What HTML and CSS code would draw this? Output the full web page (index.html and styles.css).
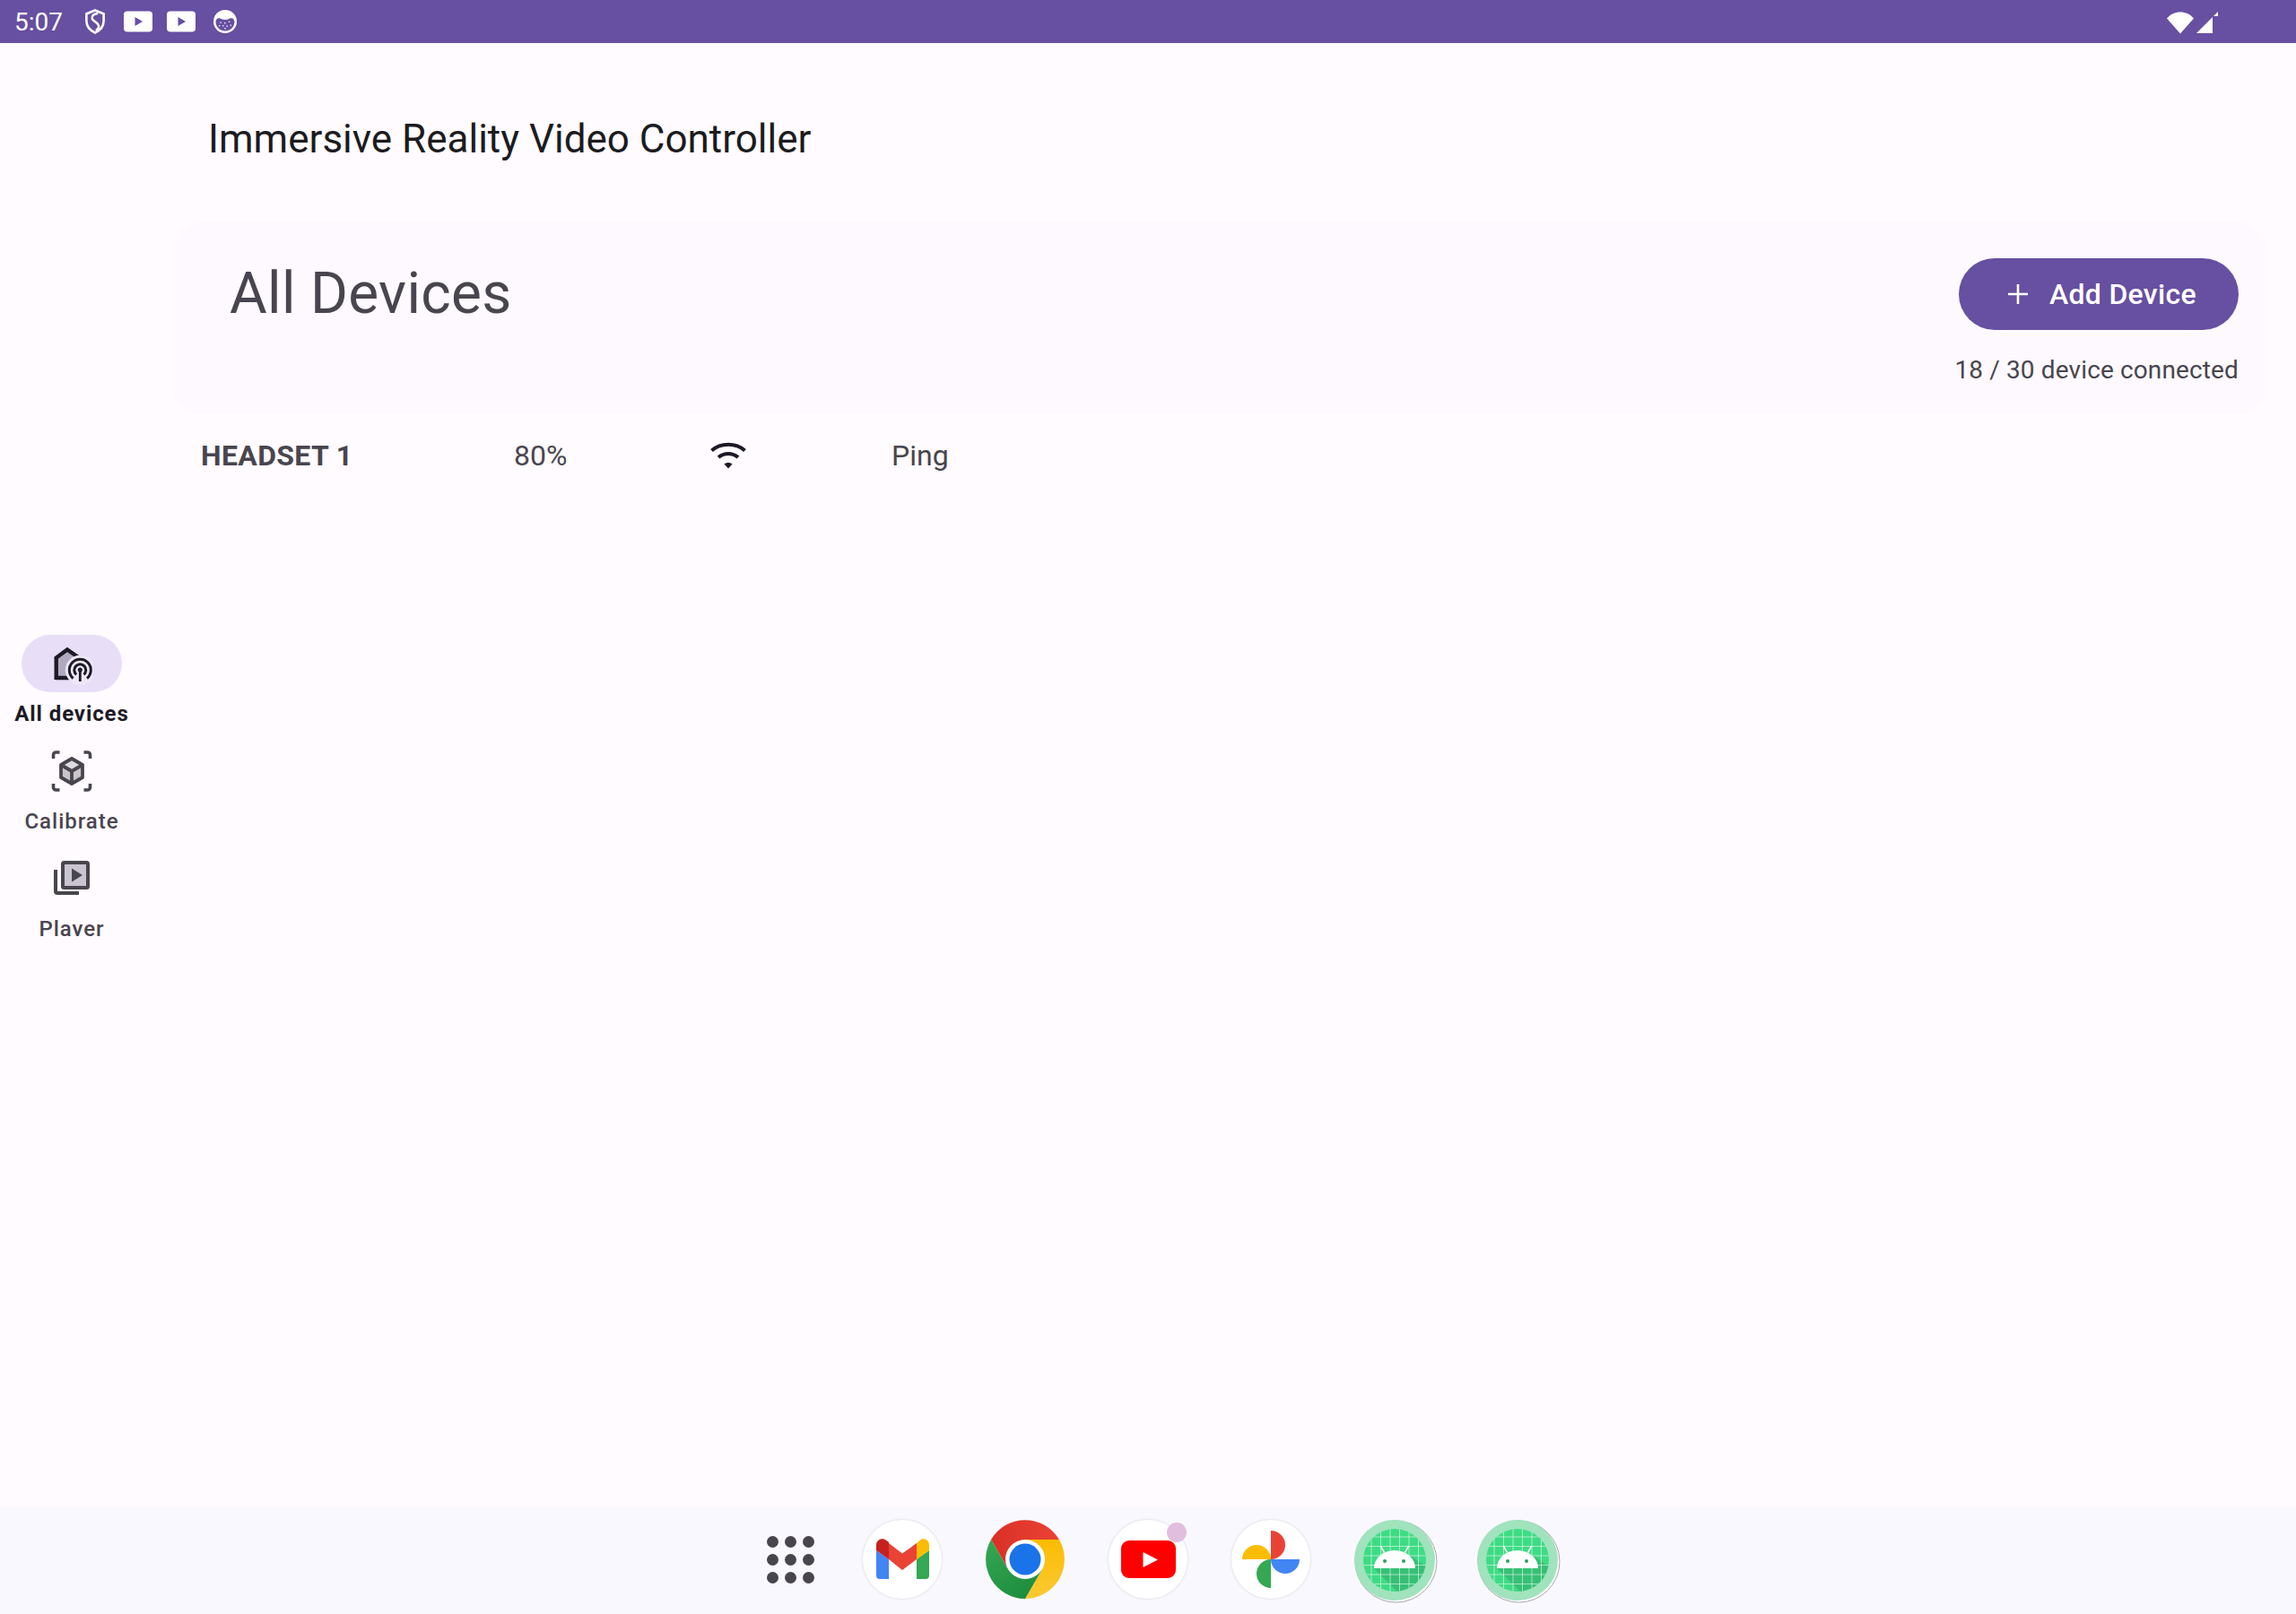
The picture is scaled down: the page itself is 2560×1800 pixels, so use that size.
FILE: index.html
```html
<!DOCTYPE html>
<html lang="en">
<head>
<meta charset="utf-8">
<title>Immersive Reality Video Controller</title>
<link rel="stylesheet" href="styles.css">
</head>
<body>
<div class="app">
  <header class="statusbar">
    <span class="time">5:07</span>
    <svg class="st-shield" width="22" height="28" viewBox="0 0 24 28" preserveAspectRatio="none"><path d="M12 1.500 22.500 5.500V13c0 6-4.200 10.800-10.500 13.500C5.700 23.800 1.500 19 1.500 13V5.500Z" fill="none" stroke="#fff" stroke-width="2.800"/><path d="M15.500 5C10 5.500 7.500 8 8.500 11c1 2.800 7.500 4 8 8 .2 1.800-1 3.500-3.500 5" fill="none" stroke="#fff" stroke-width="2.600"/></svg>
    <svg class="st-yt" width="32" height="24" viewBox="0 0 32 24"><rect width="32" height="23" y=".5" rx="4" fill="#fff"/><path d="M12.500 7v10l8.500-5z" fill="#674fa1"/></svg>
    <svg class="st-yt" width="32" height="24" viewBox="0 0 32 24"><rect width="32" height="23" y=".5" rx="4" fill="#fff"/><path d="M12.500 7v10l8.500-5z" fill="#674fa1"/></svg>
    <svg class="st-cat" width="28" height="28" viewBox="0 0 28 28"><circle cx="14" cy="14" r="13" fill="#fff"/><path d="M3.500 14C4 11 6 9.500 8.500 10.500c3.500 2 7.500 2 11 0C22 9.500 24 11 24.500 14c0 6-4.700 10.500-10.500 10.500S3.500 20 3.500 14Z" fill="#674fa1"/><path d="M8.500 14.500h1.400v1.400H8.500ZM13 15h1.400v1.400H13ZM17.800 13.500h1.400v1.400h-1.400ZM11 18h1.400v1.400H11ZM15.500 18.500h1.400v1.400h-1.400ZM13.300 21h1.400v1.400h-1.400ZM7 18h1.400v1.400H7ZM19.600 17.500H21v1.400h-1.400Z" fill="#fff" opacity=".85"/></svg>
    <span class="spacer"></span>
    <svg class="st-wifi" width="30" height="26" viewBox="0 0 30 26"><path d="M15 25.500 0 8.500C4 4 9 1.500 15 1.500s11 2.500 15 7Z" fill="#fff"/></svg>
    <svg class="st-signal" width="24" height="26" viewBox="0 0 24 26"><path d="M0 25 18 7v18Z" fill="#fff"/><path d="M19 6l5-5v5Z" fill="#fff"/></svg>
  </header>

  <div class="body">
    <nav class="rail">
      <a class="rail-item active">
        <span class="rail-icon">
          <svg width="48" height="48" viewBox="0 0 48 48">
            <path d="M6.700 40V17.500L19 8.500l11 7V40Z" fill="#b0a9c0"/>
            <path d="M6.700 42V17.500L19 8.500l13 9M6.700 40h17" fill="none" stroke="#1d1a26" stroke-width="4.400" stroke-linejoin="miter"/>
            <circle cx="33.300" cy="31.300" r="16.500" fill="#ede7f6"/>
            <path d="M25.600 40.500A12 12 0 1 1 41 40.500" fill="none" stroke="#1d1a26" stroke-width="3"/>
            <path d="M29.100 36.300A6.500 6.500 0 1 1 37.500 36.300" fill="none" stroke="#1d1a26" stroke-width="3"/>
            <circle cx="33.300" cy="31" r="2.500" fill="#1d1a26"/>
            <path d="M33.300 31v13" stroke="#1d1a26" stroke-width="2.800"/>
          </svg>
        </span>
        <span class="rail-label">All devices</span>
      </a>
      <a class="rail-item">
        <span class="rail-icon">
          <svg width="48" height="48" viewBox="0 0 48 48">
            <path d="M3.500 10V6a3 3 0 0 1 3-3h4M37.500 3h4a3 3 0 0 1 3 3v4M3.500 38v4a3 3 0 0 0 3 3h4M37.500 45h4a3 3 0 0 0 3-3v-4" fill="none" stroke="#49454f" stroke-width="3.600"/>
            <path d="M24 10l12 7v14l-12 7-12-7V17Z" fill="#c9c5ca"/>
            <path d="M24 10l12 7-12 7-12-7Z" fill="#dedbe0"/>
            <path d="M24 10l12 7v14l-12 7-12-7V17ZM12 17l12 7 12-7M24 24v14" fill="none" stroke="#49454f" stroke-width="3.800" stroke-linejoin="round"/>
          </svg>
        </span>
        <span class="rail-label">Calibrate</span>
      </a>
      <a class="rail-item">
        <span class="rail-icon">
          <svg width="48" height="48" viewBox="0 0 48 48">
            <rect x="14" y="6" width="28" height="28" rx="1.500" fill="#cac4d0" stroke="#49454f" stroke-width="4"/>
            <path d="M24 12.500v15l12-7.500Z" fill="#49454f"/>
            <path d="M6 14v24a2 2 0 0 0 2 2h24" fill="none" stroke="#49454f" stroke-width="4"/>
          </svg>
        </span>
        <span class="rail-label rail-label-cut">Player</span>
      </a>
    </nav>

    <main class="content">
      <h1 class="app-title">Immersive Reality Video Controller</h1>
      <section class="panel">
        <h2 class="panel-title">All Devices</h2>
        <div class="panel-side">
          <button class="add-btn">
            <svg width="24" height="24" viewBox="0 0 24 24"><path d="M12 1v22M1 12h22" stroke="#fff" stroke-width="2.600"/></svg>
            <span>Add Device</span>
          </button>
          <p class="count">18 / 30 device connected</p>
        </div>
      </section>
      <div class="device-row">
        <span class="device-name">HEADSET 1</span>
        <span class="device-val">80%</span>
        <svg class="device-wifi" width="42" height="32" viewBox="0 0 42 32"><path d="M2.500 10.500C12.500 1.500 29.500 1.500 39.500 10.500" fill="none" stroke="#1d1a26" stroke-width="4"/><path d="M10 18c6.500-5.500 15.500-5.500 22 0" fill="none" stroke="#1d1a26" stroke-width="4"/><path d="M16.500 25.500c2.700-2 6.300-2 9 0L21 30.500Z" fill="#1d1a26"/></svg>
        <span class="device-val">Ping</span>
      </div>
    </main>
  </div>

  <footer class="dock">
    <span class="launcher">
      <i></i><i></i><i></i><i></i><i></i><i></i><i></i><i></i><i></i>
    </span>
    <span class="app-icon">
      <svg width="88" height="88" viewBox="0 0 88 88">
        <path d="M15 34l14 10v22H19a4 4 0 0 1-4-4Z" fill="#4285f4"/>
        <path d="M74 34 60 44v22h10a4 4 0 0 0 4-4Z" fill="#34a853"/>
        <path d="M29 26l15 11.500L60 26V44L44 56 29 44Z" fill="#ea4335"/>
        <path d="M15 34v-6c0-6 7-8.500 10.500-5.500L29 25v19Z" fill="#c5221f"/>
        <path d="M60 44V26l4-3.500C67.500 19.500 74 22 74 28v6Z" fill="#fbbc04"/>
      </svg>
    </span>
    <span class="app-icon bare">
      <svg width="88" height="88" viewBox="0 0 88 88">
        <defs>
          <linearGradient id="cr" x1="0" x2="1" y1="0" y2="0"><stop offset="0" stop-color="#d93025"/><stop offset="1" stop-color="#ea4335"/></linearGradient>
          <linearGradient id="cg" x1="0" x2=".6" y1="0" y2="1"><stop offset="0" stop-color="#34a853"/><stop offset="1" stop-color="#1e8e3e"/></linearGradient>
          <linearGradient id="cy" x1="0" x2="0" y1="0" y2="1"><stop offset="0" stop-color="#fbbc04"/><stop offset="1" stop-color="#fcc934"/></linearGradient>
        </defs>
        <path d="M6 22A44 44 0 0 1 82 22H44L25 55Z" fill="url(#cr)"/>
        <path d="M82 22A44 44 0 0 1 44 88L63 55 44 22Z" fill="url(#cy)"/>
        <path d="M6 22A44 44 0 0 0 44 88L63 55H25Z" fill="url(#cg)"/>
        <circle cx="44" cy="44" r="22" fill="#fff"/>
        <circle cx="44" cy="44" r="17.500" fill="#1a73e8"/>
      </svg>
    </span>
    <span class="app-icon">
      <svg width="88" height="88" viewBox="0 0 88 88">
        <rect x="14" y="23" width="61" height="42" rx="9" fill="#f00"/>
        <path d="M38.500 36v17L55 44.500Z" fill="#fff"/>
      </svg>
      <i class="badge"></i>
    </span>
    <span class="app-icon">
      <svg width="88" height="88" viewBox="0 0 88 88">
        <path d="M44 44V12a16 16 0 0 1 0 32Z" fill="#ea4335"/>
        <path d="M44 44H12a16 16 0 0 1 32 0Z" fill="#fbbc04"/>
        <path d="M44 44h32a16 16 0 0 1-32 0Z" fill="#4285f4"/>
        <path d="M44 44v32a16 16 0 0 1 0-32Z" fill="#34a853"/>
      </svg>
    </span>
    <span class="app-icon bare">
      <svg width="94" height="94" viewBox="0 0 94 94">
        <defs>
          <clipPath id="inner"><circle cx="45" cy="45" r="35"/></clipPath>
        </defs>
        <circle cx="46.500" cy="46.500" r="45.500" fill="#fff" stroke="#a8a5b0" stroke-width="1"/>
        <circle cx="45" cy="45" r="45" fill="#a0e3bd"/>
        <circle cx="45" cy="45" r="35" fill="#3ddc84"/>
        <g clip-path="url(#inner)">
          <path d="M22 54 60 92 92 60 58 37Z" fill="#2f9e63" opacity=".45"/>
          <path d="M8.500 10v70M19 10v70M29.500 10v70M40 10v70M50.500 10v70M61 10v70M71.500 10v70M10 8.500h70M10 19h70M10 29.500h70M10 40h70M10 50.500h70M10 61h70M10 71.500h70" stroke="#fff" stroke-opacity=".55" stroke-width="1"/>
        </g>
        <path d="M22 54a23 20 0 0 1 46 0Z" fill="#fff"/>
        <path d="M29.500 29.500l4 7M60.500 29.500l-4 7" stroke="#fff" stroke-width="1.600"/>
        <circle cx="34" cy="46" r="2" fill="#2f9e63"/><circle cx="55" cy="46" r="2" fill="#2f9e63"/>
      </svg>
    </span>
    <span class="app-icon bare">
      <svg width="94" height="94" viewBox="0 0 94 94">
        <defs>
          <clipPath id="inner2"><circle cx="45" cy="45" r="35"/></clipPath>
        </defs>
        <circle cx="46.500" cy="46.500" r="45.500" fill="#fff" stroke="#a8a5b0" stroke-width="1"/>
        <circle cx="45" cy="45" r="45" fill="#a0e3bd"/>
        <circle cx="45" cy="45" r="35" fill="#3ddc84"/>
        <g clip-path="url(#inner2)">
          <path d="M22 54 60 92 92 60 58 37Z" fill="#2f9e63" opacity=".45"/>
          <path d="M8.500 10v70M19 10v70M29.500 10v70M40 10v70M50.500 10v70M61 10v70M71.500 10v70M10 8.500h70M10 19h70M10 29.500h70M10 40h70M10 50.500h70M10 61h70M10 71.500h70" stroke="#fff" stroke-opacity=".55" stroke-width="1"/>
        </g>
        <path d="M22 54a23 20 0 0 1 46 0Z" fill="#fff"/>
        <path d="M29.500 29.500l4 7M60.500 29.500l-4 7" stroke="#fff" stroke-width="1.600"/>
        <circle cx="34" cy="46" r="2" fill="#2f9e63"/><circle cx="55" cy="46" r="2" fill="#2f9e63"/>
      </svg>
    </span>
  </footer>
</div>
</body>
</html>
```

FILE: styles.css
```css
* { box-sizing: border-box; }
html, body { margin: 0; padding: 0; }
body { font-family: Roboto, "Noto Sans", sans-serif; background: #fffbfe; color: #49454f; }

.app { width: 2560px; height: 1800px; display: flex; flex-direction: column; overflow: hidden; }

/* status bar */
.statusbar { height: 48px; flex: none; background: #674fa1; display: flex; align-items: center; padding-left: 16px; color: #fff; }
.time { font-size: 28px; width: 79px; line-height: 48px; position: relative; top: 1px; }
.st-shield { margin-right: 21px; }
.st-yt { margin-right: 16px; }
.st-cat { margin-left: 3px; }
.spacer { flex: 1; }
.st-wifi { margin-right: 3px; margin-top: 2px; }
.st-signal { margin-right: 87px; margin-top: 2px; }

/* layout */
.body { flex: 1; display: flex; min-height: 0; }

/* navigation rail */
.rail { width: 192px; flex: none; padding: 660px 32px 0 0; display: flex; flex-direction: column; align-items: center; }
.rail-item { width: 160px; height: 120px; display: flex; flex-direction: column; align-items: center; flex: none; }
.rail-icon { width: 112px; height: 64px; border-radius: 32px; display: flex; align-items: center; justify-content: center; flex: none; }
.active .rail-icon { background: #e8def8; }
.rail-label { font-size: 24px; line-height: 32px; letter-spacing: 1px; font-weight: 500; color: #49454f; margin-top: 8px; white-space: nowrap; }
.rail-label-cut { height: 24px; overflow: hidden; }
.active .rail-label { font-weight: 700; color: #1d1a26; letter-spacing: .9px; }

/* content */
.content { flex: 1; min-width: 0; padding-right: 32px; }
.app-title { height: 200px; margin: 0; padding: 13px 0 0 40px; display: flex; align-items: center; font-size: 44px; font-weight: 400; color: #1c1b1f; }
.panel { height: 214px; background: #fdf9fe; border-radius: 32px; display: flex; justify-content: space-between; padding: 40px 32px 0 64px; }
.panel-title { margin: 0; font-size: 64px; line-height: 80px; font-weight: 400; color: #49454f; letter-spacing: .3px; }
.panel-side { display: flex; flex-direction: column; align-items: flex-end; gap: 25px; }
.add-btn { width: 312px; height: 80px; border: 0; border-radius: 40px; background: #674fa1; color: #fff; display: flex; align-items: center; padding: 0 0 0 54px; gap: 23px; font: 500 32px Roboto, sans-serif; letter-spacing: .3px; }
.count { margin: 0; font-size: 28px; line-height: 40px; color: #49454f; letter-spacing: .13px; }

.device-row { display: grid; grid-template-columns: 349px 200px 221px auto; justify-content: start; align-items: center; padding-left: 32px; height: 92px; font-size: 32px; }
.device-name { font-weight: 700; letter-spacing: .35px; }
.device-wifi { margin-left: 18px; }

/* dock */
.dock { height: 120px; flex: none; background: #f9f8ff; display: flex; align-items: center; gap: 49px; padding: 0 0 2px 848px; }
.launcher { width: 66px; margin-right: -1px; display: grid; grid-template-columns: repeat(3, 13px); gap: 7px; justify-content: center; }
.launcher i { width: 13px; height: 13px; border-radius: 50%; background: #49454f; }
.app-icon { position: relative; width: 88px; height: 88px; flex: none; border-radius: 50%; background: #fff; box-shadow: 0 0 3px rgba(0,0,0,.16); display: block; }
.app-icon svg { display: block; }
.app-icon.bare { background: transparent; box-shadow: none; }
.badge { position: absolute; left: 65px; top: 3px; width: 22px; height: 22px; border-radius: 50%; background: #e1bedd; }
```
